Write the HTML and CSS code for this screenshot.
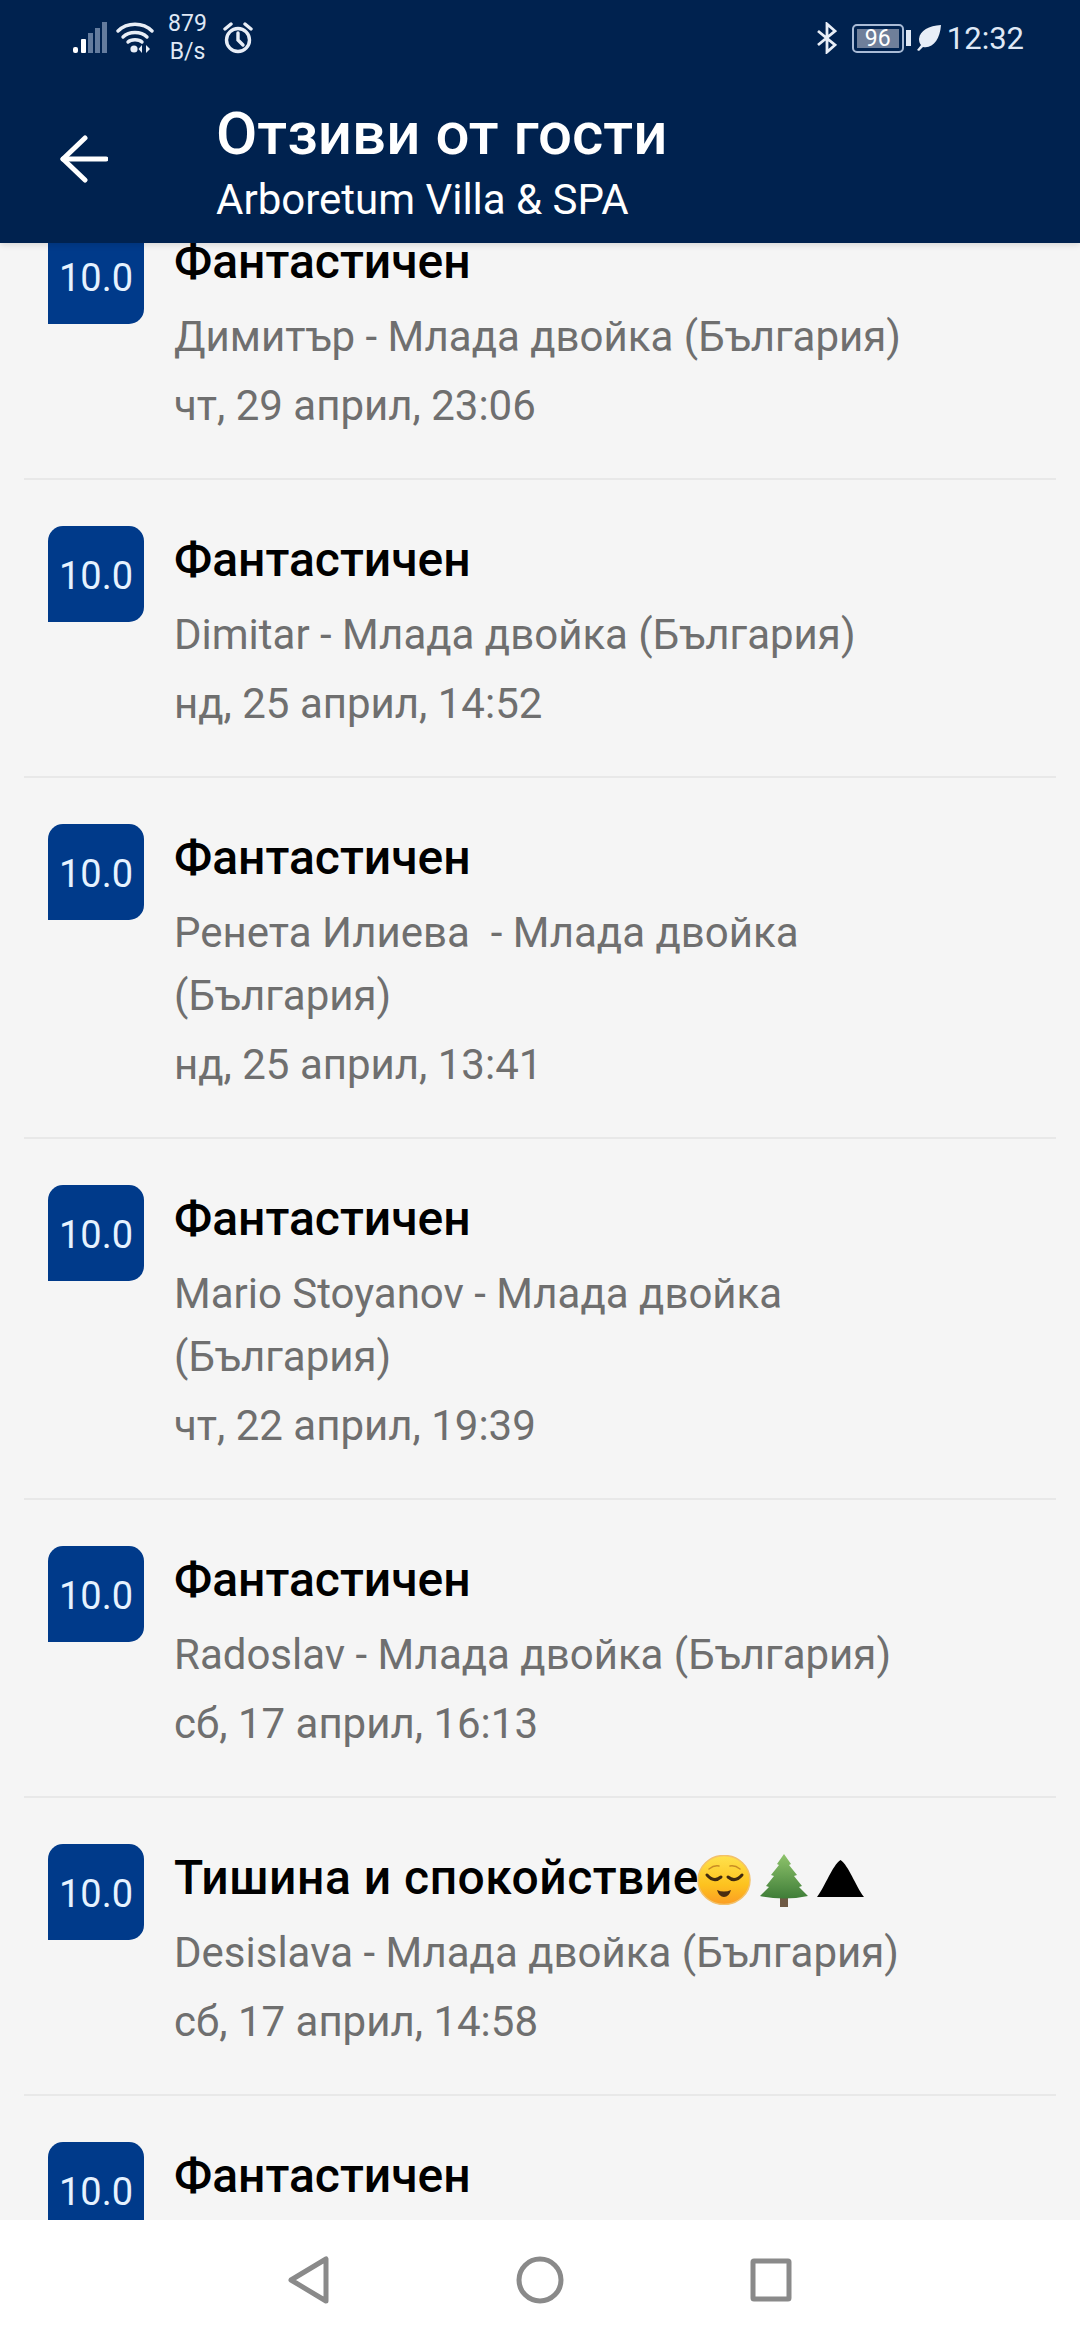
FILE: index.html
```html
<!DOCTYPE html>
<html lang="bg">
<head>
  <meta charset="UTF-8">
  <title>Отзиви от гости</title>
  <link rel="stylesheet" href="styles.css">
</head>
<body>
  <div class="phone">
    <header class="top">
      <div class="status">
        <div class="status-left">
          <svg class="signal" width="35" height="32" viewBox="0 0 35 32">
            <rect x="0" y="25" width="5" height="6" rx="2" fill="#fff"/>
            <rect x="8" y="17" width="5" height="14" rx="1" fill="#fff"/>
            <rect x="15" y="11" width="5" height="20" fill="#647c9e"/>
            <rect x="22" y="6" width="5" height="25" fill="#647c9e"/>
            <rect x="29" y="0" width="5" height="31" fill="#647c9e"/>
          </svg>
          <svg class="wifi" width="38" height="32" viewBox="0 0 38 32" fill="none" stroke="#e8eef7" stroke-width="3.4" stroke-linecap="round">
            <path d="M2 9 C11 0 27 0 36 9"/>
            <path d="M7 15 C13 9 25 9 31 15"/>
            <path d="M12 20 C15 17 23 17 26 20"/>
            <circle cx="18" cy="27" r="3.6" fill="#e8eef7" stroke="none"/>
            <path d="M26 23 L26 31 L22.500 27 Z M30 23 L30 31 L34 27 Z" fill="#e8eef7" stroke="none"/>
          </svg>
          <div class="speed">879<br>B/s</div>
          <svg class="alarm" width="32" height="32" viewBox="0 0 32 32" fill="none" stroke="#e8eef7" stroke-width="3.4" stroke-linecap="round">
            <circle cx="16" cy="18" r="11.500"/>
            <path d="M16 11 V18 L21 23"/>
            <path d="M3 7 L9 2"/>
            <path d="M29 7 L23 2"/>
          </svg>
        </div>
        <div class="status-right">
          <svg class="bt" width="20" height="32" viewBox="0 0 20 32" fill="none" stroke="#e8eef7" stroke-width="2.800">
            <path d="M1 9 L18 23 L10 30 V2 L18 9 L1 23"/>
          </svg>
          <div class="battery"><span class="battery-level">96</span></div>
          <div class="battery-tip"></div>
          <svg class="leaf" width="24" height="26" viewBox="0 0 24 26">
            <path d="M24 0 C12 1 3 5 2 14 C2 17 3 19 4 20 L0 25 L2 26 L6 22 C16 24 23 14 24 0 Z" fill="#e8eef7"/>
          </svg>
          <span class="clock">12:32</span>
        </div>
      </div>
      <div class="appbar">
        <svg class="back" width="48" height="48" viewBox="0 0 48 48" fill="none" stroke="#fff" stroke-width="5" stroke-linecap="round" stroke-linejoin="round">
          <path d="M46 24 H3"/>
          <path d="M25 3 L3 24 L25 45"/>
        </svg>
        <div class="appbar-text">
          <div class="appbar-title">Отзиви от гости</div>
          <div class="appbar-sub">Arboretum Villa &amp; SPA</div>
        </div>
      </div>
    </header>

    <main class="reviews">
      <div class="list">
        <div class="review">
          <div class="score">10.0</div>
          <div class="body">
            <div class="title">Фантастичен</div>
            <div class="author">Димитър - Млада двойка (България)</div>
            <div class="date">чт, 29 април, 23:06</div>
          </div>
        </div>
        <div class="review">
          <div class="score">10.0</div>
          <div class="body">
            <div class="title">Фантастичен</div>
            <div class="author">Dimitar - Млада двойка (България)</div>
            <div class="date">нд, 25 април, 14:52</div>
          </div>
        </div>
        <div class="review">
          <div class="score">10.0</div>
          <div class="body">
            <div class="title">Фантастичен</div>
            <div class="author">Ренета Илиева&nbsp; - Млада двойка<br>(България)</div>
            <div class="date">нд, 25 април, 13:41</div>
          </div>
        </div>
        <div class="review">
          <div class="score">10.0</div>
          <div class="body">
            <div class="title">Фантастичен</div>
            <div class="author">Mario Stoyanov - Млада двойка<br>(България)</div>
            <div class="date">чт, 22 април, 19:39</div>
          </div>
        </div>
        <div class="review">
          <div class="score">10.0</div>
          <div class="body">
            <div class="title">Фантастичен</div>
            <div class="author">Radoslav - Млада двойка (България)</div>
            <div class="date">сб, 17 април, 16:13</div>
          </div>
        </div>
        <div class="review">
          <div class="score">10.0</div>
          <div class="body">
            <div class="title title-long">Тишина и спокойствие<svg class="emoji face" width="54" height="50" viewBox="0 0 54 50">
                <defs>
                  <linearGradient id="faceFill" x1="0" y1="0" x2="0" y2="1">
                    <stop offset="0" stop-color="#ffe24d"/>
                    <stop offset="0.6" stop-color="#fdc21f"/>
                    <stop offset="1" stop-color="#fb9d24"/>
                  </linearGradient>
                  <linearGradient id="treeFill" x1="0" y1="0" x2="0" y2="1">
                    <stop offset="0" stop-color="#8fc46c"/>
                    <stop offset="1" stop-color="#3f7d38"/>
                  </linearGradient>
                </defs>
                <ellipse cx="27" cy="25" rx="26" ry="24.500" fill="url(#faceFill)" stroke="#f3c169" stroke-width="1.500"/>
                <path d="M10 20 Q17 28 24 22 M31 22 Q38 28 45 20" fill="none" stroke="#3f2a10" stroke-width="3" stroke-linecap="round"/>
                <path d="M12 14 Q17 10 22 11 M33 11 Q38 10 43 14" fill="none" stroke="#c98d24" stroke-width="1.500" stroke-linecap="round"/>
                <path d="M20 35 Q27 38 34 35 Q32 42 27 42 Q22 42 20 35 Z" fill="#4a2c10"/>
              </svg><svg class="emoji tree" width="48" height="53" viewBox="0 0 48 53">
                <rect x="20" y="43" width="8" height="10" fill="#6f5a45"/>
                <path d="M24 0 L31 10 L29 11 L37 21 L34 22 L42 32 L39 33 L48 42 Q24 47 0 42 L9 33 L6 32 L14 22 L11 21 L19 11 L17 10 Z" fill="url(#treeFill)"/>
              </svg><svg class="emoji triangle" width="47" height="37" viewBox="0 0 47 37">
                <path d="M0 37 C9 25 15 6 23.500 0 C32 6 38 25 47 37 Z" fill="#000"/>
              </svg></div>
            <div class="author">Desislava - Млада двойка (България)</div>
            <div class="date">сб, 17 април, 14:58</div>
          </div>
        </div>
        <div class="review">
          <div class="score">10.0</div>
          <div class="body">
            <div class="title">Фантастичен</div>
          </div>
        </div>
      </div>
    </main>

    <nav class="navbar">
      <svg width="42" height="48" viewBox="0 0 42 48" fill="none" stroke="#8a8a8a" stroke-width="5" stroke-linejoin="round">
        <path d="M38 3 V45 L3 24 Z"/>
      </svg>
      <svg width="48" height="48" viewBox="0 0 48 48" fill="none" stroke="#8a8a8a" stroke-width="5">
        <circle cx="24" cy="24" r="21"/>
      </svg>
      <svg width="42" height="44" viewBox="0 0 42 44" fill="none" stroke="#8a8a8a" stroke-width="5" stroke-linejoin="round">
        <rect x="3" y="3" width="36" height="38" rx="1"/>
      </svg>
    </nav>
  </div>
</body>
</html>
```

FILE: styles.css
```css
* {
  box-sizing: border-box;
}

body {
  margin: 0;
  font-family: Roboto, "Noto Sans", sans-serif;
  background-color: #f5f5f5;
}

.phone {
  width: 1080px;
  height: 2340px;
  display: flex;
  flex-direction: column;
  overflow: hidden;
}

/* header */
.top {
  height: 243px;
  flex: none;
  background-color: #00224f;
  color: #fff;
  position: relative;
  z-index: 2;
  box-shadow: 0 2px 6px rgba(0, 0, 0, 0.12);
}

.status {
  height: 76px;
  display: flex;
  justify-content: space-between;
  align-items: center;
  padding: 0 56px 0 73px;
}

.status-left,
.status-right {
  display: flex;
  align-items: center;
}

.signal {
  margin-right: 8px;
}

.speed {
  width: 39px;
  margin: 0 15px 0 14px;
  font-size: 23px;
  line-height: 28px;
  text-align: center;
  color: #dfe8f5;
}

.bt {
  margin-right: 15px;
}

.battery {
  width: 52px;
  height: 29px;
  border: 2px solid #a9bbd6;
  border-radius: 5px;
  padding: 3px;
  display: flex;
}

.battery-level {
  flex: 1;
  background-color: #6f7f9a;
  color: #fff;
  font-size: 23px;
  line-height: 19px;
  text-align: center;
}

.battery-tip {
  width: 5px;
  height: 16px;
  margin: 0 6px 0 2px;
  background-color: #dfe8f5;
}

.leaf {
  margin-right: 6px;
}

.clock {
  font-size: 31px;
  color: #dfe8f5;
}

.appbar {
  display: flex;
  align-items: center;
  padding: 25px 0 0 60px;
}

.back {
  margin-right: 108px;
  margin-bottom: 16px;
}

.appbar-title {
  font-size: 60px;
  font-weight: 500;
  line-height: 66px;
}

.appbar-sub {
  font-size: 42px;
  line-height: 66px;
}

/* review list */
.reviews {
  flex: 1;
  overflow: hidden;
}

.list {
  margin-top: -61px;
}

.review {
  display: flex;
  gap: 30px;
  margin: 0 24px;
  padding: 46px 24px 41px;
  border-bottom: 2px solid #e8e8e8;
}

.score {
  width: 96px;
  height: 96px;
  flex: none;
  display: flex;
  align-items: center;
  justify-content: center;
  padding-top: 3px;
  background-color: #003a8a;
  color: #e6f2ff;
  font-size: 38px;
  border-radius: 15px 15px 15px 0;
}

.body {
  padding-top: 4px;
}

.title {
  font-size: 48px;
  font-weight: 500;
  line-height: 60px;
  color: #000;
  display: flex;
  align-items: center;
  margin-bottom: 13px;
}

.title-long {
  letter-spacing: 0.5px;
}

.emoji {
  flex: none;
  margin-top: 4px;
}

.face {
  margin-left: -2px;
}

.tree {
  margin-left: 9px;
}

.triangle {
  margin-left: 9px;
  margin-top: 1px;
}

.author {
  font-size: 42px;
  line-height: 63px;
  color: #6f6f6f;
}

.date {
  font-size: 42px;
  line-height: 62px;
  color: #6f6f6f;
  margin-top: 7px;
}

/* bottom nav */
.navbar {
  height: 120px;
  flex: none;
  background-color: #fff;
  position: relative;
  z-index: 2;
  display: grid;
  grid-template-columns: 42px 48px 42px;
  justify-content: center;
  column-gap: 186px;
  align-items: center;
}
```
